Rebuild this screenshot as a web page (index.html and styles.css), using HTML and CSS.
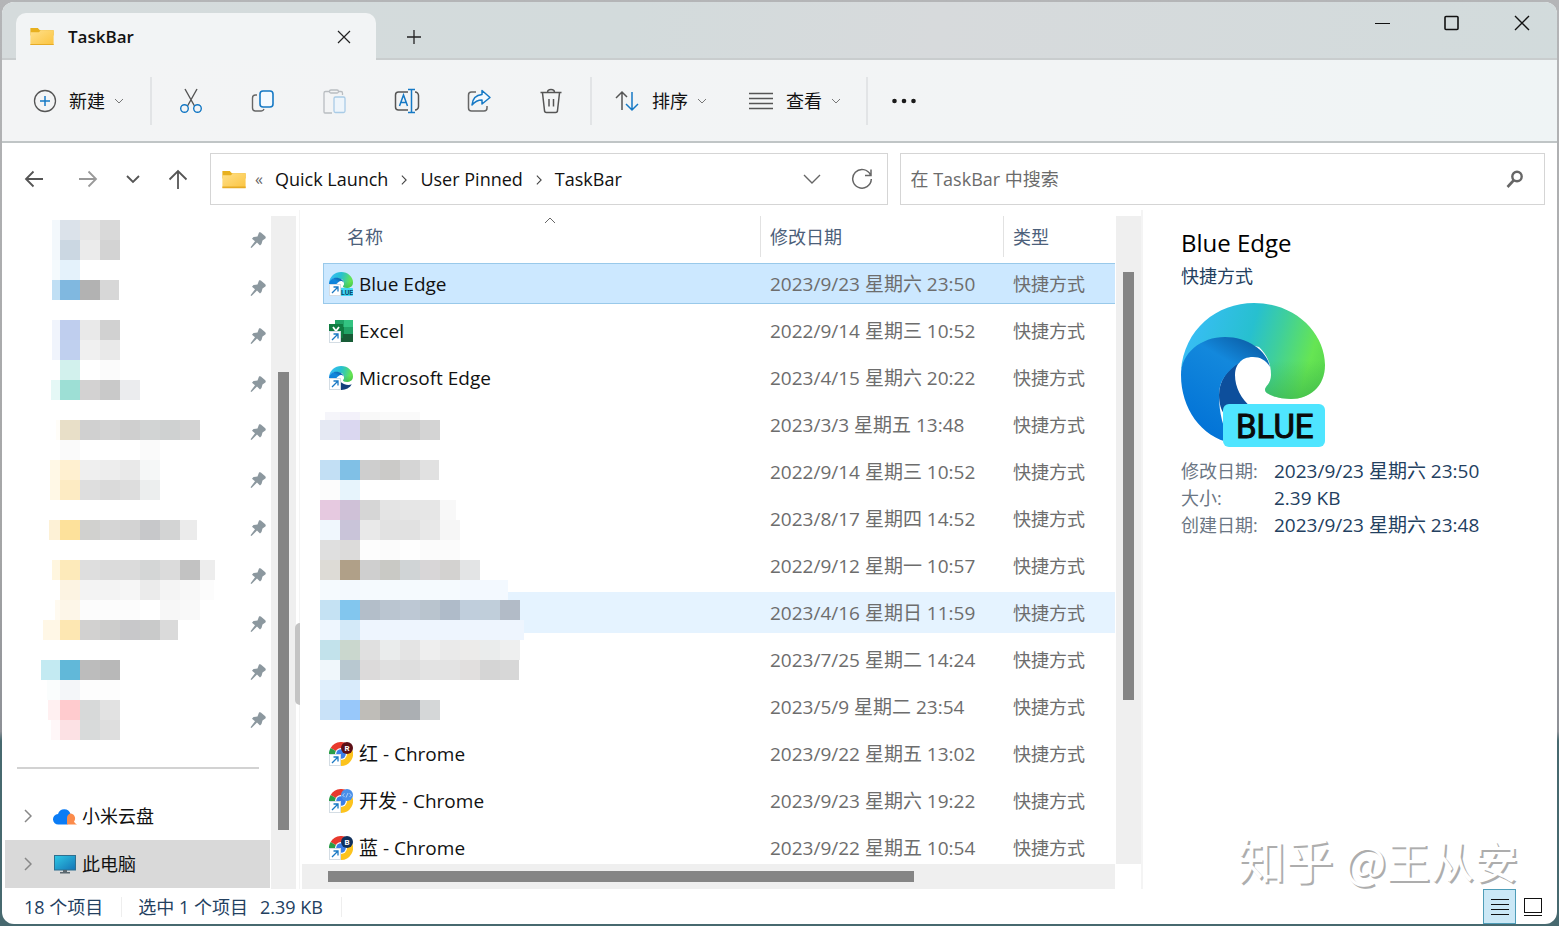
FILE: index.html
```html
<!DOCTYPE html>
<html lang="zh-CN">
<head>
    <meta charset="UTF-8">
    <meta name="viewport" content="width=device-width, initial-scale=1.0">
    <title>TaskBar</title>
    <link rel="stylesheet" href="styles.css">
</head>
<body>
    <svg class="sprites" aria-hidden="true">
        <defs>
            <linearGradient id="folderFill" x1="0" y1="0" x2="1" y2="1">
                <stop offset="0" stop-color="#ffe08a"/><stop offset="1" stop-color="#fbc440"/>
            </linearGradient>
            <linearGradient id="edgeTop" x1="0" y1="0.4" x2="1" y2="0.6">
                <stop offset="0" stop-color="#39bdf8"/><stop offset="0.45" stop-color="#27c0cf"/>
                <stop offset="0.65" stop-color="#3fcf9c"/><stop offset="0.9" stop-color="#66e553"/><stop offset="1" stop-color="#5cdb4f"/>
            </linearGradient>
            <linearGradient id="edgeShade" x1="0" y1="0" x2="0" y2="1">
                <stop offset="0.6" stop-color="#36b04a" stop-opacity="0"/><stop offset="1" stop-color="#36b04a" stop-opacity="0.6"/>
            </linearGradient>
            <linearGradient id="edgeBlue" x1="0.7" y1="0" x2="0.2" y2="1">
                <stop offset="0" stop-color="#0c62ab"/><stop offset="0.25" stop-color="#1388dc"/><stop offset="1" stop-color="#0070d6"/>
            </linearGradient>
            <linearGradient id="screenFill" x1="0" y1="0" x2="1" y2="1">
                <stop offset="0" stop-color="#2fc9e6"/><stop offset="1" stop-color="#1473b5"/>
            </linearGradient>
        </defs>
        <symbol id="folder" viewBox="0 0 24 18">
            <path d="M1 1h7l2 2h13v5H1z" fill="#e8b01e"/>
            <path d="M1 5h8l2-2h12v14H1z" fill="url(#folderFill)"/>
            <path d="M1 16.500h22" stroke="#e6ab26"/>
        </symbol>
        <symbol id="down" viewBox="0 0 10 6">
            <path d="M1 1l4 4 4-4" fill="none" stroke="currentColor"/>
        </symbol>
        <symbol id="right" viewBox="0 0 8 14">
            <path d="M1 1l6 6-6 6" fill="none" stroke="currentColor" stroke-width="1.500"/>
        </symbol>
        <symbol id="pin" viewBox="0 0 16 16">
            <path d="M9 0.500C10 0 11 0.500 12 1.500L15 4c1 1 1 2 0 2.800L12.500 8.500 11.500 12l-1.500 1.500-3-3L1.500 16 0.500 15.300 5 9.200 2 6.800 3.500 5l4-.5z" fill="#8c989f"/>
        </symbol>
        <symbol id="edge" viewBox="0 0 144 144">
            <path d="M38 86l6 50c28 16 78 6 92-26-18 8-50 4-72-20z" fill="#123f7c"/>
            <circle cx="72" cy="73" r="19" fill="#fff"/>
            <path d="M0 68C3 26 36 0 73 0c41 0 71 30 71 62 0 22-16 34-34 34-14 0-26-5-26-9s6-6 6-15c0-12-4-20-12-28L44 36C22 34 6 48 0 68z" fill="url(#edgeTop)"/>
            <path d="M0 68C3 26 36 0 73 0c41 0 71 30 71 62 0 22-16 34-34 34-14 0-26-5-26-9s6-6 6-15c0-12-4-20-12-28L44 36C22 34 6 48 0 68z" fill="url(#edgeShade)"/>
            <path d="M0 72C0 50 20 34 44 34c22 0 42 13 45 30-4-7-10-10-17-10-6 0-11 2-14 6-12 8-20 18-20 32 0 18 4 33 12 48C20 134 0 105 0 72z" fill="url(#edgeBlue)"/>
        </symbol>
        <symbol id="link" viewBox="0 0 24 24">
            <rect x="0.500" y="12.500" width="11" height="11" fill="#fff" stroke="#d4dde4"/>
            <path d="M3 21l5.500-5.500M4.500 15h4.500v4.500" fill="none" stroke="#1979c4" stroke-width="1.300"/>
        </symbol>
        <symbol id="chrome" viewBox="0 0 24 24">
            <path d="M12 12L1.600 6A12 12 0 0 1 22.400 6z" fill="#e8392d"/>
            <path d="M12 12L22.400 6A12 12 0 0 1 12 24z" fill="#fcc31e"/>
            <path d="M12 12V24A12 12 0 0 1 1.600 6z" fill="#2a9d47"/>
            <circle cx="12" cy="12" r="6" fill="#fff"/>
            <circle cx="12" cy="12" r="4.800" fill="#3a7ee8"/>
        </symbol>
    </svg>

    <div class="window">
        <header class="titleBar">
            <div class="tab">
                <svg class="folder"><use href="#folder"/></svg>
                <span class="tabName">TaskBar</span>
                <button class="tabClose" aria-label="关闭标签页"><svg width="14" height="14"><path d="M1 1l12 12M13 1L1 13" stroke="#222" stroke-width="1.200"/></svg></button>
            </div>
            <button class="newTab" aria-label="新标签页"><svg width="16" height="16"><path d="M8 1v14M1 8h14" stroke="#222" stroke-width="1.300"/></svg></button>
            <div class="windowBtns">
                <button aria-label="最小化"><svg width="16" height="16"><path d="M1 8.500h15" stroke="#111"/></svg></button>
                <button aria-label="最大化"><svg width="16" height="16"><rect x="1" y="1.500" width="13" height="13" rx="1" fill="none" stroke="#111" stroke-width="1.600"/></svg></button>
                <button aria-label="关闭"><svg width="16" height="16"><path d="M1 1l14 14M15 1L1 15" stroke="#111" stroke-width="1.400"/></svg></button>
            </div>
        </header>

        <div class="toolBar">
            <button class="textBtn newBtn">
                <svg width="24" height="24" fill="none"><circle cx="12" cy="12" r="10.500" stroke="#555" stroke-width="1.300"/><path d="M12 7v10M7 12h10" stroke="#1679c5" stroke-width="1.500"/></svg>
                <span>新建</span>
                <svg class="caret"><use href="#down"/></svg>
            </button>
            <span class="line"></span>
            <div class="iconBtns">
                <button aria-label="剪切"><svg width="26" height="26" fill="none" stroke-width="1.400"><path d="M7 1l9.500 17M19 1L9.500 18" stroke="#555"/><circle cx="6.500" cy="20.500" r="3.800" stroke="#1679c5"/><circle cx="19.500" cy="20.500" r="3.800" stroke="#1679c5"/></svg></button>
                <button aria-label="复制"><svg width="26" height="26" fill="none" stroke-width="1.400"><path d="M7 7H5.500a3 3 0 0 0-3 3v10a3 3 0 0 0 3 3H11a3 3 0 0 0 3-2" stroke="#666"/><rect x="10" y="3" width="13" height="16" rx="3" fill="#f4faff" stroke="#1679c5" stroke-width="1.600"/></svg></button>
                <button aria-label="粘贴" disabled><svg width="26" height="26" fill="none" stroke-width="1.300"><path d="M8 3.500H3.500a1.500 1.500 0 0 0-1.500 1.500v19a1 1 0 0 0 1 1h7M17 3.500h2a1.500 1.500 0 0 1 1.500 1.500v2" stroke="#b9bdc1"/><rect x="7.500" y="2" width="9" height="3" rx="1.500" stroke="#b9bdc1"/><rect x="12" y="9" width="11" height="15.500" rx="1.500" fill="#eef5fb" stroke="#a9cbe6"/></svg></button>
                <button aria-label="重命名"><svg width="26" height="26" fill="none" stroke-width="1.500"><path d="M14 4H4.500a3 3 0 0 0-3 3v12a3 3 0 0 0 3 3H14M21 4a3.500 3.500 0 0 1 3.500 3.500v11A3.500 3.500 0 0 1 21 22" stroke="#555"/><path d="M17.500 2v22.500M14 1.500h7M14 24.500h7M5.500 18l4-11 4 11M7 14.500h5" stroke="#1679c5"/></svg></button>
                <button aria-label="共享"><svg width="26" height="26" fill="none" stroke-width="1.500"><path d="M10 4H5.500a3 3 0 0 0-3 3v13a3 3 0 0 0 3 3H18a3 3 0 0 0 3-3v-2" stroke="#666"/><path d="M16 2.500l8 7-8 6.500v-4c-5 0-7.500 2-10 5 .5-6 4-10 10-10.500z" fill="#f4faff" stroke="#1679c5" stroke-linejoin="round"/></svg></button>
                <button aria-label="删除"><svg width="26" height="26" fill="none" stroke="#555" stroke-width="1.500"><path d="M2.500 4.500h21M9.500 4.500c0-4 7-4 7 0M4.500 5l2 17.500a2 2 0 0 0 2 2h9a2 2 0 0 0 2-2L21.500 5M11 11v7.500M15.500 11v7.500"/></svg></button>
            </div>
            <span class="line"></span>
            <button class="textBtn sortBtn">
                <svg width="26" height="24" fill="none" stroke-width="1.500"><path d="M8 21V3M2 9l6-6 5 5" stroke="#555"/><path d="M18 3v18M12 15l6 6 6-6" stroke="#1679c5"/></svg>
                <span>排序</span>
                <svg class="caret"><use href="#down"/></svg>
            </button>
            <button class="textBtn">
                <svg width="26" height="24"><path d="M1 4.500h24M1 9.500h24M1 14.500h24M1 19.500h24" stroke="#555" stroke-width="1.300"/></svg>
                <span>查看</span>
                <svg class="caret"><use href="#down"/></svg>
            </button>
            <span class="line viewLine"></span>
            <button class="moreBtn" aria-label="更多"><svg width="26" height="6" fill="#1a1a1a"><circle cx="3.500" cy="3" r="2.300"/><circle cx="13" cy="3" r="2.300"/><circle cx="22.500" cy="3" r="2.300"/></svg></button>
        </div>

        <div class="navBar">
            <div class="arrows">
                <button aria-label="后退"><svg width="20" height="20"><path d="M19 10H2M9.500 2.500L2 10l7.500 7.500" stroke="#555"/></svg></button>
                <button aria-label="前进"><svg width="20" height="20"><path d="M1 10h17M10.500 2.500L18 10l-7.500 7.500" stroke="#999"/></svg></button>
                <button class="recent" aria-label="最近浏览的位置"><svg width="14" height="20"><path d="M1 7l6 6 6-6" stroke="#555"/></svg></button>
                <button aria-label="上移"><svg width="20" height="20"><path d="M10 20V2M1.500 10.500L10 2l8.500 8.500" stroke="#555"/></svg></button>
            </div>
            <nav class="address">
                <svg class="folder"><use href="#folder"/></svg>
                <span class="before">«</span>
                <a href="#">Quick Launch</a>
                <svg class="step"><use href="#right"/></svg>
                <a href="#">User Pinned</a>
                <svg class="step"><use href="#right"/></svg>
                <a href="#">TaskBar</a>
                <button class="history" aria-label="历史记录"><svg width="18" height="20"><path d="M1 6l8 8 8-8" stroke="#666" stroke-width="1.400"/></svg></button>
                <button aria-label="刷新"><svg width="22" height="22"><path d="M19.500 7A9.300 9.300 0 1 0 20.300 11M20 1.500V7.500H14" stroke="#666" stroke-width="1.500"/></svg></button>
            </nav>
            <form class="search">
                <input type="text" aria-label="搜索" placeholder="在 TaskBar 中搜索">
                <button type="button" aria-label="开始搜索"><svg width="18" height="18"><circle cx="11" cy="6.500" r="4.700" stroke="#666" stroke-width="2.400"/><path d="M8 10l-6.500 7" stroke="#666" stroke-width="2.600"/></svg></button>
            </form>
        </div>

        <main class="content">
            <aside class="sideBar">
                <div class="tree">
                    <ul id="pinned"></ul>
                    <hr>
                    <ul>
                        <li class="drive">
                            <svg class="open"><use href="#right"/></svg>
                            <svg width="24" height="18"><path d="M5.500 17.500A5.200 5.200 0 0 1 5 7a6.500 6.500 0 0 1 12.500 0L14.500 17.500z" fill="#0b7cf5"/><path d="M14 17.500V11c0-3 2-4.500 4-4.500a5 5 0 0 1 3 8c1 2 2 2.500 3 3z" fill="#fb8b4b"/></svg>
                            <a href="#">小米云盘</a>
                        </li>
                        <li class="drive current">
                            <svg class="open"><use href="#right"/></svg>
                            <svg width="24" height="20"><rect x="1.500" y="1.500" width="21" height="14.500" fill="url(#screenFill)" stroke="#2f6f8f"/><path d="M10 16h4v2h3v1.500H7V18h3z" fill="#5b6870"/></svg>
                            <a href="#">此电脑</a>
                        </li>
                    </ul>
                    <svg class="mosaic" id="sideMosaic"></svg>
                </div>
                <div class="scroll sideScroll"><div class="thumb"></div></div>
                <div class="grip"></div>
            </aside>

            <section class="fileList">
                <div class="files">
                    <table>
                        <thead>
                            <tr>
                                <th class="name">名称<svg class="sorted" width="12" height="7"><path d="M1 6l5-5 5 5" fill="none" stroke="#666"/></svg></th>
                                <th class="date">修改日期</th>
                                <th class="type">类型</th>
                            </tr>
                        </thead>
                        <tbody>
                            <tr class="selected">
                                <td class="name"><div class="file"><svg class="icon" viewBox="0 0 24 24"><use href="#edge" width="24" height="24"/><rect x="11" y="16" width="13" height="8" rx="1" fill="#42d7f5"/><text x="12" y="23" class="tiny dark">LUE</text><use href="#link"/></svg>Blue Edge</div></td>
                                <td>2023/9/23 星期六 23:50</td>
                                <td class="type">快捷方式</td>
                            </tr>
                            <tr>
                                <td class="name"><div class="file"><svg class="icon" viewBox="0 0 24 24"><rect x="6" y="1" width="18" height="22" fill="#21a366"/><path d="M15 1h9v7h-9z" fill="#33c481"/><path d="M6 8h9v7H6z" fill="#107c41"/><path d="M6 15h18v8H6z" fill="#185c37"/><rect x="0" y="5" width="14" height="14" fill="#107c41"/><path d="M4 8l6 8M10 8l-6 8" stroke="#fff" stroke-width="1.800"/><use href="#link"/></svg>Excel</div></td>
                                <td>2022/9/14 星期三 10:52</td>
                                <td class="type">快捷方式</td>
                            </tr>
                            <tr>
                                <td class="name"><div class="file"><svg class="icon" viewBox="0 0 24 24"><use href="#edge" width="24" height="24"/><use href="#link"/></svg>Microsoft Edge</div></td>
                                <td>2023/4/15 星期六 20:22</td>
                                <td class="type">快捷方式</td>
                            </tr>
                            <tr><td></td><td>2023/3/3 星期五 13:48</td><td class="type">快捷方式</td></tr>
                            <tr><td></td><td>2022/9/14 星期三 10:52</td><td class="type">快捷方式</td></tr>
                            <tr><td></td><td>2023/8/17 星期四 14:52</td><td class="type">快捷方式</td></tr>
                            <tr><td></td><td>2022/9/12 星期一 10:57</td><td class="type">快捷方式</td></tr>
                            <tr class="hovered"><td></td><td>2023/4/16 星期日 11:59</td><td class="type">快捷方式</td></tr>
                            <tr><td></td><td>2023/7/25 星期二 14:24</td><td class="type">快捷方式</td></tr>
                            <tr><td></td><td>2023/5/9 星期二 23:54</td><td class="type">快捷方式</td></tr>
                            <tr>
                                <td class="name"><div class="file"><svg class="icon" viewBox="0 0 24 24"><use href="#chrome"/><circle cx="18" cy="6" r="6" fill="#5c0f16"/><text x="15.500" y="9" class="tiny">R</text><use href="#link"/></svg>红 - Chrome</div></td>
                                <td>2023/9/22 星期五 13:02</td>
                                <td class="type">快捷方式</td>
                            </tr>
                            <tr>
                                <td class="name"><div class="file"><svg class="icon" viewBox="0 0 24 24"><use href="#chrome"/><circle cx="18" cy="6" r="6" fill="#4a8fe8"/><path d="M15.500 4.500L13.500 6l2 2M20.500 4.500l2 1.500-2 2M19 4l-2 4.500" fill="none" stroke="#a9cdf8"/><use href="#link"/></svg>开发 - Chrome</div></td>
                                <td>2023/9/23 星期六 19:22</td>
                                <td class="type">快捷方式</td>
                            </tr>
                            <tr>
                                <td class="name"><div class="file"><svg class="icon" viewBox="0 0 24 24"><use href="#chrome"/><circle cx="18" cy="6" r="6" fill="#10305c"/><text x="15.500" y="9" class="tiny">B</text><use href="#link"/></svg>蓝 - Chrome</div></td>
                                <td>2023/9/22 星期五 10:54</td>
                                <td class="type">快捷方式</td>
                            </tr>
                        </tbody>
                    </table>
                    <svg class="mosaic" id="fileMosaic"></svg>
                </div>
                <div class="scroll fileScroll"><div class="thumb"></div></div>
                <div class="hScroll"><div class="thumb"></div></div>
            </section>

            <aside class="details">
                <h1>Blue Edge</h1>
                <p class="kind">快捷方式</p>
                <svg class="preview" viewBox="0 0 144 144">
                    <path d="M60 58C46 66 38 78 38 92c0 8 2 16 6 20l26-8C60 96 54 84 54 72c0-6 2-11 6-14z" fill="#0d4f9c"/>
                    <path d="M0 68C3 26 36 0 73 0c41 0 71 30 71 62 0 22-16 34-34 34-14 0-26-5-26-9s6-6 6-15c0-12-4-20-12-28L44 36C22 34 6 48 0 68z" fill="url(#edgeTop)"/>
                    <path d="M0 68C3 26 36 0 73 0c41 0 71 30 71 62 0 22-16 34-34 34-14 0-26-5-26-9s6-6 6-15c0-12-4-20-12-28L44 36C22 34 6 48 0 68z" fill="url(#edgeShade)"/>
                    <path d="M0 72C0 50 20 34 44 34c22 0 42 13 45 30-4-7-10-10-17-10-6 0-11 2-14 6-12 8-20 18-20 32 0 18 4 33 12 48C20 134 0 105 0 72z" fill="url(#edgeBlue)"/>
                    <rect x="42" y="101" width="102" height="43" rx="6" fill="#4fe5ff"/>
                    <text x="55" y="135" class="badge">BLUE</text>
                </svg>
                <dl>
                    <dt>修改日期:</dt><dd>2023/9/23 星期六 23:50</dd>
                    <dt>大小:</dt><dd>2.39 KB</dd>
                    <dt>创建日期:</dt><dd>2023/9/23 星期六 23:48</dd>
                </dl>
                <div class="watermark">知乎 <span>@王从安</span></div>
            </aside>
        </main>

        <footer class="statusBar">
            <span class="count">18 个项目</span>
            <span class="count"><span class="chosen">选中 1 个项目</span>2.39 KB</span>
            <div class="viewBtns">
                <button class="on" aria-label="详细信息"><svg width="20" height="18"><path d="M1 1.500h18M1 6.500h18M1 11.500h18M1 16.500h18" stroke="#111"/></svg></button>
                <button aria-label="大图标"><svg width="20" height="20"><rect x="1.500" y="1.500" width="17" height="14" fill="none" stroke="#111"/><path d="M1 18.500h18" stroke="#111"/></svg></button>
            </div>
        </footer>
    </div>
    <script src="script.js"></script>
</body>
</html>
```

FILE: styles.css
```css
*
{
    box-sizing: border-box;
}
body
{
    margin: 0;
    height: 100vh;
    padding: 2px;
    overflow: hidden;
    background: linear-gradient(#b4b5b7 0, #a4a5a6 60%, #8d9096 79%, #47696f 80%, #47696f 100%);
    font-family: "Open Sans", "Noto Sans CJK SC", sans-serif;
    font-size: 18px;
    line-height: 24px;
    color: #111;
}
button
{
    display: flex;
    align-items: center;
    justify-content: center;
    border: none;
    background: none;
    padding: 0;
    font: inherit;
    color: inherit;
}
svg
{
    flex: none;
    display: block;
}
a
{
    color: inherit;
    text-decoration: none;
}
ul
{
    list-style: none;
    margin: 0;
    padding: 0;
}
.sprites
{
    position: absolute;
    width: 0;
    height: 0;
}
.window
{
    display: flex;
    flex-direction: column;
    height: 100%;
    border-radius: 12px;
    overflow: hidden;
    background: #fff;
}

/* title bar */
.titleBar
{
    display: flex;
    align-items: flex-end;
    height: 58px;
    padding-left: 14px;
    background: linear-gradient(100deg, #d5dbdc, #d3dbdc 40%, #d7dadc 60%, #d2dbdc);
    box-shadow: inset 0 -2px #c9cdce;
}
.tab
{
    display: flex;
    align-items: center;
    width: 360px;
    height: 47px;
    padding: 0 25px 0 13px;
    border-radius: 10px 10px 0 0;
    background: #f2f4f5;
}
.folder
{
    width: 26px;
    height: 19px;
}
.tabName
{
    margin-left: 13px;
    font-size: 17px;
    font-weight: 600;
}
.tabClose
{
    margin-left: auto;
}
.newTab
{
    width: 76px;
    height: 46px;
}
.windowBtns
{
    display: flex;
    align-self: flex-start;
    margin-left: auto;
}
.windowBtns button
{
    width: 70px;
    height: 41px;
}

/* tool bar */
.toolBar
{
    display: flex;
    align-items: center;
    height: 83px;
    border-bottom: 2px solid #c0c5c6;
    background: linear-gradient(90deg, #f3f4f5, #f2f4f5 70%, #eff4f5);
}
.textBtn
{
    gap: 12px;
}
.newBtn
{
    padding: 0 26px 0 31px;
}
.caret
{
    width: 10px;
    height: 6px;
    margin-left: -3px;
    color: #777;
}
.line
{
    width: 2px;
    height: 48px;
    background: #e2e4e6;
}
.iconBtns
{
    display: flex;
    padding: 0 3px;
}
.iconBtns button
{
    width: 72px;
    height: 48px;
}
.sortBtn
{
    padding: 0 41px 0 22px;
}
.viewLine
{
    margin: 0 23px 0 25px;
}

/* address row */
.navBar
{
    display: flex;
    height: 67px;
    padding: 10px 12px 5px 0;
}
.navBar svg
{
    fill: none;
    stroke-width: 1.8px;
}
.arrows
{
    display: flex;
    width: 208px;
    padding-left: 22px;
    gap: 34px;
}
.arrows .recent
{
    margin: 0 -6px;
}
.address, .search
{
    display: flex;
    align-items: center;
    border: 1px solid #d5d5d5;
}
.address
{
    flex: 651;
    padding: 0 14px 0 10px;
}
.address .before
{
    margin: 0 12px 0 8px;
    font-size: 16px;
    color: #666;
}
.step
{
    width: 6px;
    height: 10px;
    margin: 2px 13px 0;
    color: #444;
}
.history
{
    margin: 0 30px 0 auto;
}
.search
{
    flex: 613;
    margin-left: 12px;
    padding: 0 20px 0 10px;
}
.search input
{
    flex: 1;
    min-width: 0;
    padding: 0;
    border: none;
    outline: none;
    font: inherit;
    background: none;
}
.search input::placeholder
{
    color: #6b6b6b;
}

/* side bar */
.content
{
    display: flex;
    flex: 1;
    min-height: 0;
}
.sideBar
{
    position: relative;
    display: flex;
    width: 298px;
    border-right: 1px solid #f4f4f4;
}
.tree
{
    flex: 1;
    padding: 6px 1px 0 3px;
}
.tree li
{
    display: flex;
    align-items: center;
    height: 48px;
}
#pinned li
{
    justify-content: flex-end;
    padding-right: 4px;
}
.pin
{
    width: 16px;
    height: 16px;
}
.tree hr
{
    height: 2px;
    margin: 23px 11px 23px 12px;
    border: none;
    background: #d2d2d2;
}
.drive .open
{
    width: 8px;
    height: 14px;
    margin: 0 21px 0 19px;
    color: #888;
}
.drive a
{
    margin-left: 5px;
}
.tree .current
{
    background: #d9d9d9;
}
.scroll
{
    width: 25px;
    margin-top: 6px;
    background: #efefef;
}
.scroll .thumb
{
    width: 11px;
    margin: 0 auto;
    background: #858585;
}
.sideScroll
{
    padding-top: 156px;
    margin-right: 3px;
}
.sideScroll .thumb
{
    height: 458px;
}
.grip
{
    position: absolute;
    right: -1px;
    top: 413px;
    width: 5px;
    height: 82px;
    border-radius: 5px 0 0 5px;
    background: #c4c4c4;
}
.mosaic
{
    position: absolute;
    left: 0;
    top: 0;
    width: 260px;
    height: 100%;
    pointer-events: none;
}

/* file list */
.fileList
{
    display: grid;
    grid-template-columns: 1fr 25px;
    grid-template-rows: 1fr 25px;
    flex: 1;
    min-width: 0;
    padding-left: 2px;
    border-right: 2px solid #f4f4f4;
}
.files
{
    position: relative;
    min-height: 0;
    padding: 0 1px 0 21px;
    overflow: hidden;
}
.files table
{
    width: 100%;
    table-layout: fixed;
    border-collapse: separate;
    border-spacing: 0 6px;
}
.files th, .files td
{
    height: 41px;
    padding: 0 0 0 10px;
    text-align: left;
    white-space: nowrap;
}
.files th
{
    padding-left: 9px;
    font-weight: 400;
    color: #4c607a;
    border-left: 1px solid #e2e2e2;
}
.files th.name
{
    position: relative;
    padding-left: 24px;
    border-left: none;
}
.sorted
{
    position: absolute;
    top: 1px;
    left: 24px;
    right: 8px;
    margin: 0 auto;
}
.files th.date
{
    width: 243px;
}
.files th.type
{
    width: 112px;
}
.files td
{
    font-size: 19px;
    color: #6d6d6d;
}
.files td.name
{
    padding-left: 6px;
    color: #111;
}
.files td.type
{
    font-size: 18px;
}
.file
{
    display: flex;
    align-items: center;
    gap: 6px;
}
.icon
{
    width: 24px;
    height: 24px;
}
.tiny
{
    font: 700 8px Roboto, sans-serif;
    fill: #fff;
}
.tiny.dark
{
    font-size: 7px;
    fill: #0b4a6b;
}
.selected td
{
    background: #cce8ff;
    border: solid #99c9ea;
    border-width: 1px 0;
}
.selected td.name
{
    border-left-width: 1px;
    padding-left: 5px;
}
.hovered td
{
    background: #e5f3ff;
}
.fileScroll
{
    padding-top: 56px;
}
.fileScroll .thumb
{
    height: 428px;
}
.hScroll
{
    display: flex;
    align-items: center;
    margin-right: 1px;
    padding-left: 26px;
    background: #efefef;
}
.hScroll .thumb
{
    width: 75%;
    max-width: 586px;
    height: 11px;
    background: #858585;
}

/* details pane */
.details
{
    position: relative;
    width: 414px;
    padding: 18px 0 0 38px;
    color: #23405f;
}
.details h1
{
    margin: 0;
    font-size: 24px;
    font-weight: 400;
    line-height: 30px;
    color: #000;
}
.details .kind
{
    margin: 6px 0 15px;
}
.preview
{
    width: 144px;
    height: 144px;
}
.badge
{
    font: 400 33px Roboto, sans-serif;
    fill: #0a0a0a;
    stroke: #0a0a0a;
    stroke-width: 1px;
}
.details dl
{
    display: grid;
    grid-template-columns: 93px 1fr;
    margin: 11px 0 0;
    line-height: 27px;
}
.details dt
{
    color: #6b7684;
}
.details dd
{
    margin: 0;
    font-size: 19px;
}
.watermark
{
    position: absolute;
    right: 39px;
    bottom: 1px;
    font-family: "Noto Sans CJK SC", sans-serif;
    font-size: 48px;
    line-height: 56px;
    white-space: nowrap;
    color: #fff;
    text-shadow: 2px 2px #adadad;
}
.watermark span
{
    font-size: 44px;
}

/* status bar */
.statusBar
{
    display: flex;
    align-items: center;
    height: 35px;
    padding: 0 8px 0 22px;
    color: #23405f;
}
.count
{
    padding-right: 18px;
    margin-right: 16px;
    border-right: 1px solid #eee;
    line-height: 20px;
}
.chosen
{
    margin-right: 12px;
}
.viewBtns
{
    display: flex;
    align-self: stretch;
    margin-left: auto;
}
.viewBtns button
{
    width: 33px;
}
.viewBtns .on
{
    border: 1px solid #4f9db8;
    background: #cbe8f6;
}
```

FILE: script.js
```js
// each line: left, top, right, then one colour for every 20px cell
const sideBlocks = [
    [52, 220, 120, "f3f8fc dbe2ea e6e6e6 d9d9d9"],
    [52, 240, 120, "f3f8fc cbd7e2 ebebeb d3d3d3"],
    [52, 260, 80, "f4fafd e4f2fb"],
    [52, 280, 119, "c0dff4 80b8e0 b2b2b2 d7d7d7"],
    [52, 320, 120, "f0f4fc bfceee e9e9e9 d1d1d1"],
    [52, 340, 120, "f0f4fc c0d0ef f0f0f0 e9e9e9"],
    [60, 360, 120, "d2f1ed ffffff fbfbfb"],
    [51, 380, 140, "e5f8f6 9ddfd5 d3d2d2 c9c9c9 ebecee"],
    [56, 420, 200, "fffdf8 e8dfc8 d0d0d0 d3d3d3 cfcfcf d2d4d4 cfd1d1 d3d3d3"],
    [60, 440, 160, "fafafa ffffff ffffff ffffff fafafa"],
    [50, 460, 160, "fff8e6 fff0d0 efefef ededed e9e9e9 f5f7f7"],
    [50, 480, 160, "fff8e6 fdebc3 dedede dadada dddddd eceeee"],
    [49, 520, 197, "fdf1d6 fde19b d1d1cf d5d5d5 d3d3d3 c7c8ca d3d4d4 ebebeb"],
    [52, 560, 215, "fff6df fdeaba dedede dbdbdb dbdbdb d4d6d6 dbdbdb c2c2c2 ededed"],
    [60, 580, 214, "fcf3e2 f3f3f3 f3f3f3 f6f6f6 ebebeb f4f4f4 f8f8f8 fcfcfc"],
    [55, 600, 200, "fffaf0 fdf6e8 fcfcfc fcfcfc fcfcfc ffffff f7f7f7 f9f9f9"],
    [43, 620, 178, "fff7e6 fde7b2 d2d1d0 cdcdcc c8c8ca c9caca dadada"],
    [41, 660, 120, "c3eaf2 61b8d9 bcbcbc b8b8b8"],
    [47, 680, 120, "fafdfd f4f6f9 fdfdfd fdfdfd"],
    [48, 700, 120, "fff0f1 ffcbce d7d9d9 e2e2e2"],
    [51, 720, 120, "fff7f8 fce1e4 d8dada dedede"]
];
const fileBlocks = [
    [325, 412, 420, "f5f5fa f3f1fa f8f8f8 fafafa fafafa"],
    [320, 420, 440, "e5e9f3 dad7f0 cfcfcf d4d4d4 cbcbcb d4d4d4"],
    [320, 460, 439, "c2dff4 80c0e6 cecece cbcac8 d5d5d5 e1e1e1"],
    [320, 480, 360, "fcfcfc e7f4fc"],
    [320, 500, 456, "e6c9e0 cfc1d7 d6d6d6 e4e4e4 e6e6e6 e6e6e6 f8f8f8"],
    [320, 520, 460, "f0f7fd c9c4d9 e9e9e9 e2e2e2 e1e1e1 e8e8e8 f6f6f6"],
    [320, 540, 460, "dfdfdf dcdbda fdfdfd fbfbfb fefefe fbfbfb fbfbfb"],
    [320, 560, 480, "dddbd6 b0a088 cfcfcf c9c9c5 d0d4d6 d8d6d7 d3d2d0 e3e4e5"],
    [320, 580, 508, "f5fafe f3f9fe f5fafe f5fafe f5fafe f5fafe f5fafe f3f9ff f3f9ff f3f9ff"],
    [320, 600, 520, "c5e2f3 82c6ee b3bec9 bac5d0 bdc8d4 b9c4ce afbbc9 c0cedc c0ceda b2bbc7"],
    [320, 620, 524, "eef6fe d3e9f8 eef5fe eef5fe eef5fe eef5fe eef5fe eef5fe eef5fe eef5fe eef5fe"],
    [320, 640, 520, "c2e2eb cad7ce e0e0e0 eaecec e4e4e4 eeeeee eaeaea ecebea eaecec eeefef"],
    [320, 660, 519, "f0f7fb b8c8d0 dcdada e0e0e0 dedede e3e3e3 e3e3e3 e1dfde d5d5d5 d7d7d7"],
    [320, 680, 360, "e0effc d9ebfb"],
    [320, 700, 440, "c9e2f8 98c8fa bfbdb8 aeadab abafb3 d5d7d8"]
];

drawBlocks("sideMosaic", sideBlocks, 2, 210);
drawBlocks("fileMosaic", fileBlocks, 302, 210);
drawPins();

function drawBlocks(id, blocks, left, top)
{
    let html = "";
    blocks.forEach(([start, y, end, colors]) => {
        let x = start;
        colors.split(" ").forEach(color => {
            let next = Math.min(Math.floor(x / 20) * 20 + 20, end);
            let height = y % 20 == 0 ? 20 : 8;
            html += `<rect x="${x - left}" y="${y - top}" width="${next - x}" height="${height}" fill="#${color}"/>`;
            x = next;
        });
    });
    document.getElementById(id).innerHTML = html;
}

function drawPins()
{
    let list = document.getElementById("pinned");
    for (let i = 0; i < 11; i++) {
        let item = document.createElement("li");
        item.innerHTML = '<svg class="pin"><use href="#pin"/></svg>';
        list.append(item);
    }
}
```
